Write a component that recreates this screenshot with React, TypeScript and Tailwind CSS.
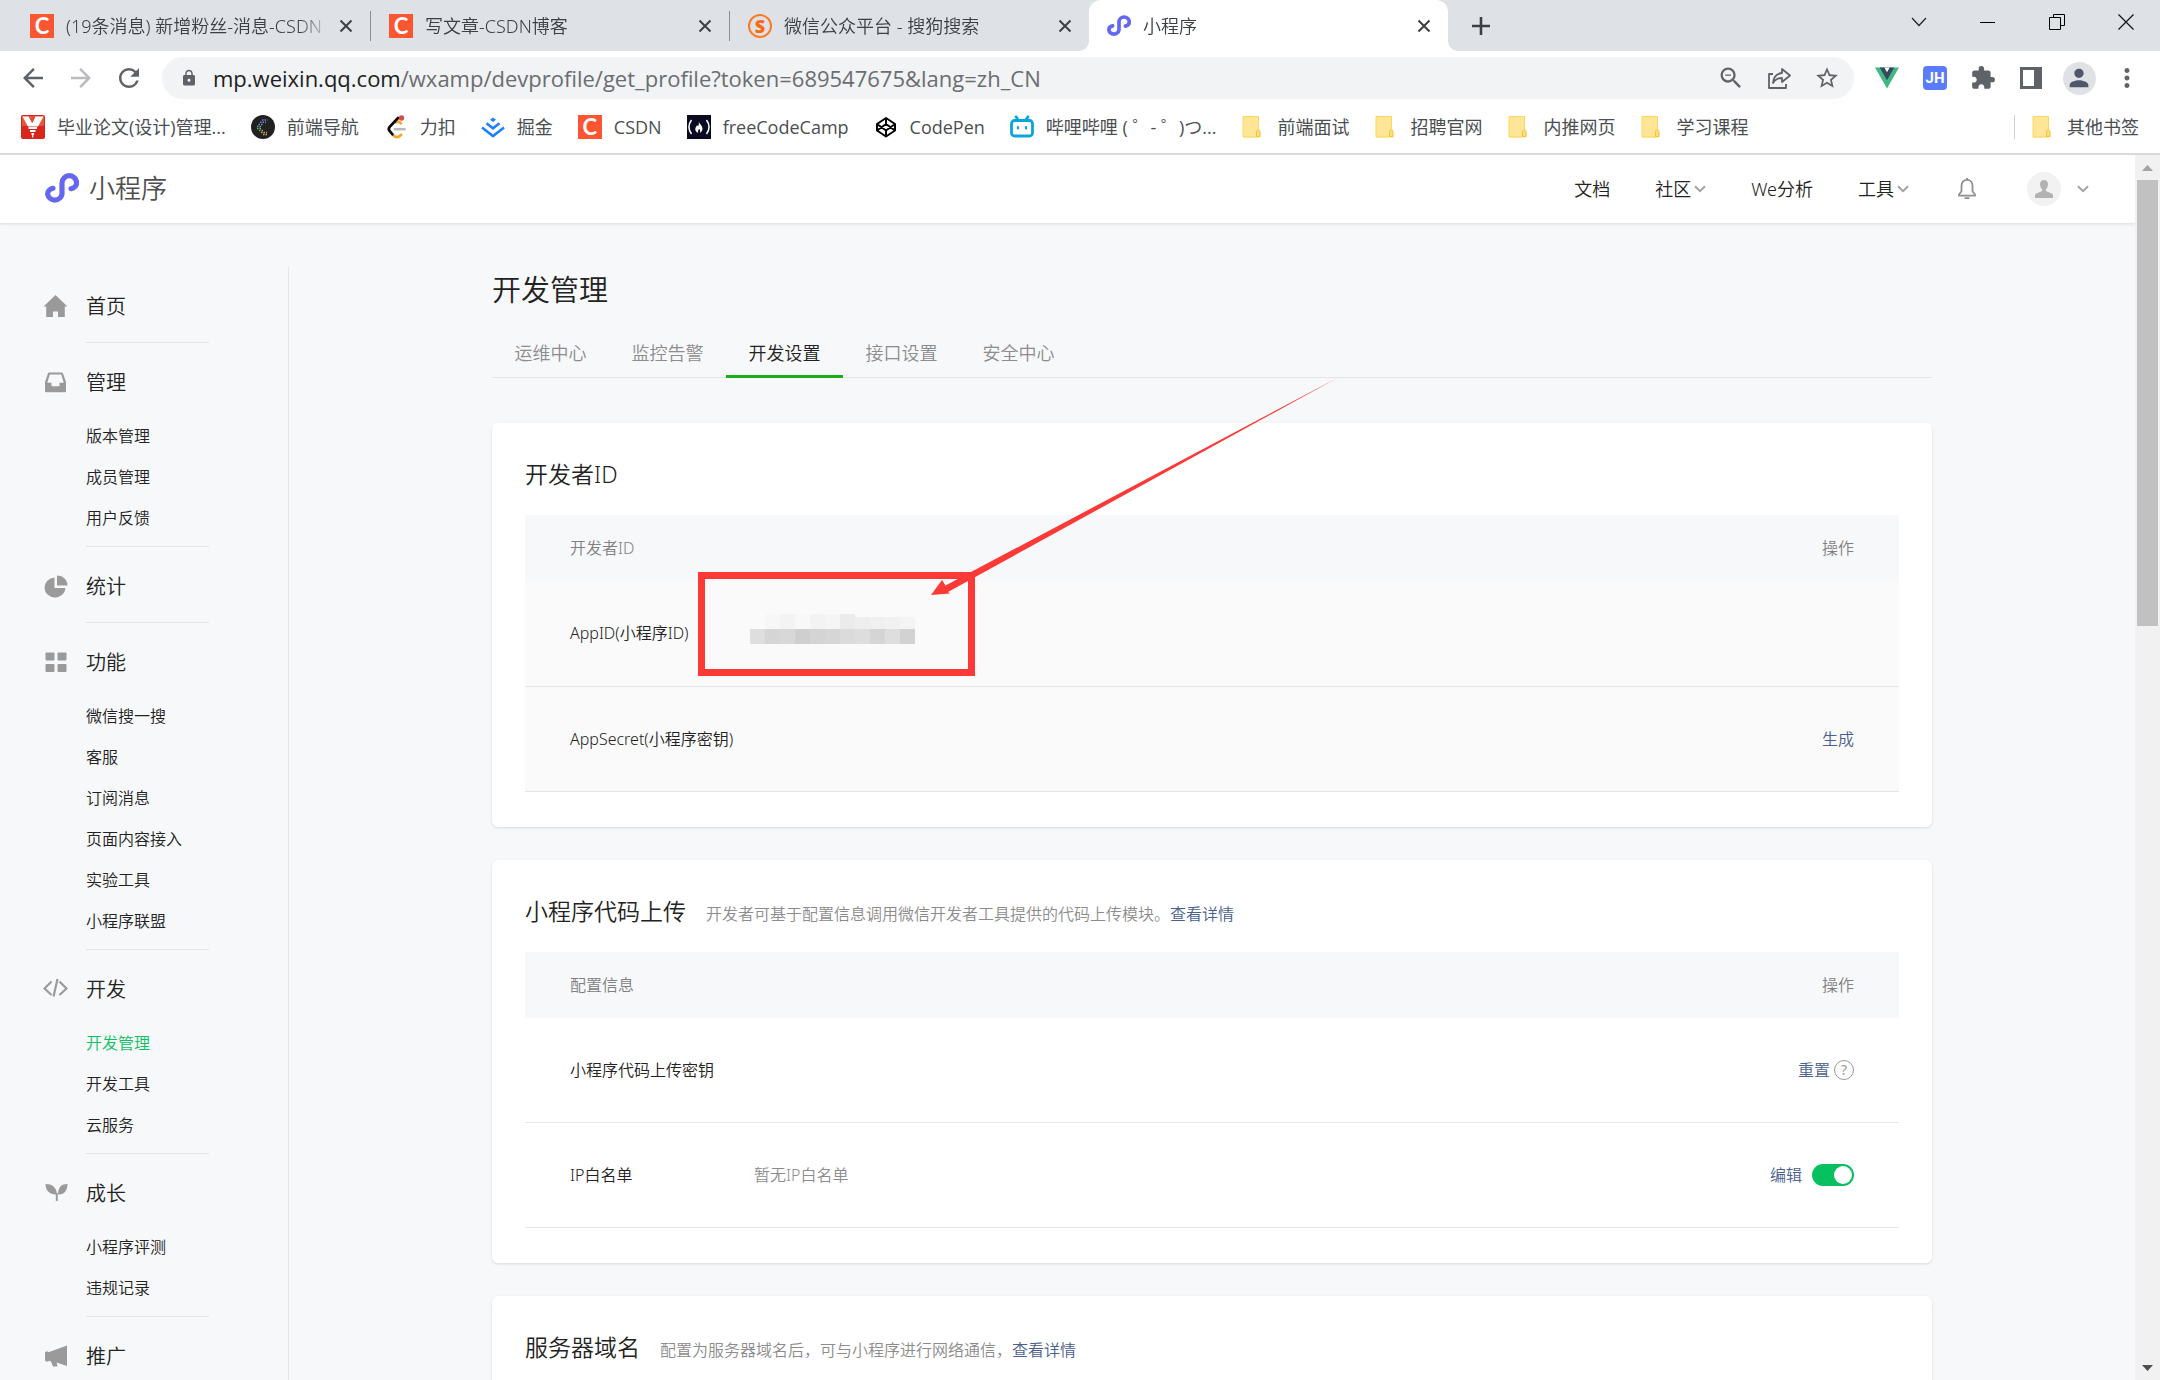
import type { ReactNode } from "react";
import {
  MdArrowBack,
  MdArrowForward,
  MdRefresh,
  MdLock,
  MdZoomOut,
  MdStarBorder,
  MdExtension,
  MdPerson,
  MdMoreVert,
} from "react-icons/md";

function MiniProgramMark({ className }: { className: string }) {
  return (
    <svg viewBox="0 0 34 31" className={className} fill="none" stroke="#6467f0" strokeWidth="5.2" strokeLinecap="round">
      <path d="M26 15.7C29 15 31.6 12.8 31.6 10A7.3 7.3 0 0 0 17 10V21A7.3 7.3 0 0 1 2.6 21C2.6 18.2 5 16 8 15.3" />
    </svg>
  );
}

function CsdnIcon() {
  return (
    <span className="flex size-6 shrink-0 items-center justify-center bg-[#fc5531] font-['Lato'] text-[22px] leading-6 font-bold text-white">
      C
    </span>
  );
}

function SogouIcon() {
  return (
    <span className="flex size-6 shrink-0 items-center justify-center rounded-full border-2 border-[#fb7a22] font-['Open_Sans'] text-[18px] leading-5 font-extrabold text-[#fb6a12]">
      S
    </span>
  );
}

function CloseIcon() {
  return (
    <svg viewBox="0 0 14 14" className="size-3.5" stroke="#3c4043" strokeWidth="2">
      <path d="M1.5 1.5l11 11M12.5 1.5l-11 11" />
    </svg>
  );
}

function Chevron({ className = "" }: { className?: string }) {
  return (
    <svg viewBox="0 0 12 8" className={"h-2 w-3 " + className} fill="none" stroke="#a3a3a3" strokeWidth="2">
      <path d="M1 1.2l5 5 5-5" />
    </svg>
  );
}

function FolderIcon() {
  return (
    <svg viewBox="0 0 24 24" className="size-6 shrink-0">
      <path d="M2 1.5h15.5v14.5l2 1v5.500H2z" fill="#ffe596" />
      <path d="M2 1.500h15.500v14.500M2 1.500v20.500h14" fill="none" stroke="#fbd85d" strokeWidth="1" />
      <path d="M15.500 21.500v-5c0-1 1-1.500 2-1.500s1.500.6 1.500 1.500v5z" fill="#fddf7a" stroke="#f2c53c" strokeWidth="1" />
    </svg>
  );
}

const bookmarkIcons: Record<string, ReactNode> = {
  thesis: (
    <svg viewBox="0 0 24 24" className="size-6 shrink-0">
      <rect width="24" height="24" rx="2" fill="#d9261c" />
      <rect x="1" y="1" width="22" height="10" rx="1" fill="#e8553f" />
      <path d="M1.500 1.500h6l3.500 6.500 3-6.500h8.500l-5.500 10h-10z" fill="#fff" />
      <path d="M12 1.500h2.500l-3 6.500-2-4z" fill="#d9503c" />
      <path d="M7.500 13h8.500M9 16h5.500M10.500 19h2.500" stroke="#fff" strokeWidth="1.800" />
      <path d="M11.700 22.500v-3" stroke="#fff" strokeWidth="1.200" />
    </svg>
  ),
  nav: (
    <svg viewBox="0 0 24 24" className="size-6 shrink-0">
      <circle cx="12" cy="12" r="12" fill="#212121" />
      <g strokeWidth="1.500" strokeDasharray="1.500 1">
        <path d="M11 5h5.500M9 7.200h6" stroke="#7d7fc4" />
        <path d="M7.500 9.500h4.500M6 11.500h4" stroke="#5d9fb0" />
        <path d="M6 13.500h5M8 15.500h5" stroke="#7fb069" />
        <path d="M10 17.500h6M12 19.500h4" stroke="#d9a05b" />
      </g>
    </svg>
  ),
  leetcode: (
    <svg viewBox="0 0 24 24" className="size-6 shrink-0" fill="none" strokeWidth="2.600" strokeLinecap="round">
      <path d="M9.500 20.500c2.500 2.500 5.500 2 7.800-.8M11.500 7.500c2-1.500 4-1 5.500.8" stroke="#f5a623" />
      <path d="M14 3L6 11.500c-1.500 1.500-1.500 3.500 0 5l2.500 2.800" stroke="#0a0a0a" />
      <path d="M11 14.300h9.500" stroke="#b9b9b9" />
      <circle cx="17.500" cy="3" r="2.700" fill="#d64c4c" stroke="none" />
    </svg>
  ),
  juejin: (
    <svg viewBox="0 0 24 24" className="size-6 shrink-0" fill="none" stroke="#1e80ff" strokeWidth="2.600">
      <path d="M12 2.500l3 2.300-3 2.300-3-2.300z" fill="#1e80ff" stroke="none" />
      <path d="M5.500 8.300L12 13.300l6.500-5M1 12.500l11 8.500 11-8.500" />
    </svg>
  ),
  csdn: <CsdnIcon />,
  fcc: (
    <svg viewBox="0 0 24 24" className="size-6 shrink-0">
      <rect width="24" height="24" fill="#0a0a23" />
      <path d="M4.500 5c-3.300 4.500-3.300 9.500 0 14M19.500 5c3.300 4.500 3.300 9.500 0 14" fill="none" stroke="#fff" strokeWidth="1.500" />
      <path d="M11.500 6c.4 2.600 4 4.400 4 7.800 0 2-1.300 3.500-2.600 4 .9-1.800 0-3-.9-4-.3 1.300-1.500 2.200-.7 4-1.800-.5-3.200-2-3-4.100.2-1.800 1.300-2.200 1.700-3.500.9.300.9.900.9 1.300 1.100-1.300 1.300-3.500.6-5.500z" fill="#fff" />
    </svg>
  ),
  codepen: (
    <svg viewBox="0 0 24 24" className="size-6 shrink-0" fill="none" stroke="#000" strokeWidth="2" strokeLinejoin="round">
      <path d="M12 3l9 6v6.500l-9 6-9-6V9zM12 3v6M12 15.500v6M3 9l9 6.500L21 9M3 15.500L12 9l9 6.500" />
    </svg>
  ),
  bilibili: (
    <svg viewBox="0 0 24 24" className="size-6 shrink-0" fill="none" stroke="#0aa5de" strokeWidth="2.800" strokeLinecap="round">
      <rect x="1.500" y="5.500" width="21" height="15.500" rx="3" />
      <path d="M6 1.800l2 3M18 1.800l-2 3" />
      <path d="M8 12v1.500M16 12v1.500" strokeWidth="2.200" />
    </svg>
  ),
  folder: <FolderIcon />,
};

const bookmarks = [
  { icon: "thesis", label: "毕业论文(设计)管理..." },
  { icon: "nav", label: "前端导航" },
  { icon: "leetcode", label: "力扣" },
  { icon: "juejin", label: "掘金" },
  { icon: "csdn", label: "CSDN" },
  { icon: "fcc", label: "freeCodeCamp" },
  { icon: "codepen", label: "CodePen" },
  { icon: "bilibili", label: "哔哩哔哩 ( ゜- ゜)つ..." },
  { icon: "folder", label: "前端面试" },
  { icon: "folder", label: "招聘官网" },
  { icon: "folder", label: "内推网页" },
  { icon: "folder", label: "学习课程" },
];

function BrowserTab({ icon, title, divider = false }: { icon: ReactNode; title: string; divider?: boolean }) {
  return (
    <div className="flex h-full w-[359px] items-center">
      <div className="flex h-full min-w-0 flex-1 items-center pr-[17px] pl-[18px]">
        {icon}
        <span className="ml-3 flex-1 overflow-hidden text-[18px] leading-6 whitespace-nowrap [mask-image:linear-gradient(to_right,black_88%,transparent)]">
          {title}
        </span>
        <button type="button" aria-label="关闭标签页" className="ml-2 shrink-0">
          <CloseIcon />
        </button>
      </div>
      {divider && <span className="h-[30px] w-px bg-[#8a8d91]" />}
    </div>
  );
}

function TabStrip() {
  return (
    <div className="flex h-[51px] bg-[#dee1e6] pl-3 text-[#3c4043]">
      <BrowserTab icon={<CsdnIcon />} title="(19条消息) 新增粉丝-消息-CSDN" divider />
      <BrowserTab icon={<CsdnIcon />} title="写文章-CSDN博客" divider />
      <BrowserTab icon={<SogouIcon />} title="微信公众平台 - 搜狗搜索" />
      <div className="relative h-full rounded-t-xl bg-white">
        <svg viewBox="0 0 10 10" className="absolute bottom-0 -left-2.5 size-2.5">
          <path d="M10 0v10H0A10 10 0 0 0 10 0z" fill="#fff" />
        </svg>
        <BrowserTab icon={<MiniProgramMark className="h-[22px] w-6 shrink-0" />} title="小程序" />
        <svg viewBox="0 0 10 10" className="absolute -right-2.5 bottom-0 size-2.5">
          <path d="M0 0v10h10A10 10 0 0 1 0 0z" fill="#fff" />
        </svg>
      </div>
      <button type="button" aria-label="新标签页" className="ml-6">
        <svg viewBox="0 0 18 18" className="size-[18px]" stroke="#3c4043" strokeWidth="2.600">
          <path d="M9 0v18M0 9h18" />
        </svg>
      </button>
      <div className="ml-auto flex h-11">
        <button type="button" aria-label="搜索标签页" className="flex w-[69px] items-center justify-center">
          <svg viewBox="0 0 16 10" className="h-2.5 w-4" fill="none" stroke="#222" strokeWidth="1.200">
            <path d="M1 1l7 7.500L15 1" />
          </svg>
        </button>
        <button type="button" aria-label="最小化" className="flex w-[69px] items-center justify-center">
          <span className="h-px w-[15px] bg-black" />
        </button>
        <button type="button" aria-label="还原" className="flex w-[69px] items-center justify-center">
          <svg viewBox="0 0 16 16" className="size-4" fill="none" stroke="#000" strokeWidth="1">
            <path d="M.5 3.500h11v12H.5zM4.500 3.500v-3h11v11h-4" />
          </svg>
        </button>
        <button type="button" aria-label="关闭窗口" className="flex w-[69px] items-center justify-center">
          <svg viewBox="0 0 16 16" className="size-4" stroke="#111" strokeWidth="1.200">
            <path d="M.5.5l15 15M15.500.5l-15 15" />
          </svg>
        </button>
      </div>
    </div>
  );
}

function ToolButton({ label, children }: { label: string; children: ReactNode }) {
  return (
    <button type="button" aria-label={label} className="flex w-12 shrink-0 items-center justify-center text-[#5f6368]">
      {children}
    </button>
  );
}

function Toolbar() {
  return (
    <div className="flex h-[54px] items-center bg-white px-[9px]">
      <ToolButton label="后退">
        <MdArrowBack className="size-[30px]" />
      </ToolButton>
      <ToolButton label="前进">
        <MdArrowForward className="size-[30px] text-[#b9bbbe]" />
      </ToolButton>
      <ToolButton label="刷新">
        <MdRefresh className="size-[30px]" />
      </ToolButton>
      <div className="mx-[9px] flex h-[42px] flex-1 items-center rounded-full bg-[#f1f3f4] pr-[3px] pl-[18px]">
        <MdLock className="size-[18px] text-[#5f6368]" />
        <p className="ml-[15px] flex-1 font-['Open_Sans'] text-[22px] leading-7 font-normal whitespace-nowrap text-[#6a6d71]">
          <span className="text-[#202124]">mp.weixin.qq.com</span>
          /wxamp/devprofile/get_profile?token=689547675&amp;lang=zh_CN
        </p>
        <ToolButton label="缩小">
          <MdZoomOut className="size-7" />
        </ToolButton>
        <ToolButton label="分享">
          <svg viewBox="0 0 24 24" className="size-6" fill="none" stroke="#5f6368" strokeWidth="1.800" strokeLinejoin="round">
            <path d="M6 8H2v14h17v-4" />
            <path d="M15 3l8 6.500-8 6.500v-4c-4.500 0-7 1.500-9 5 .5-6 3.500-9.500 9-10z" />
          </svg>
        </ToolButton>
        <ToolButton label="收藏">
          <MdStarBorder className="size-[26px]" />
        </ToolButton>
      </div>
      <ToolButton label="Vue">
        <svg viewBox="0 0 24 22" className="h-[22px] w-6">
          <path d="M0 .5h24L12 21.500z" fill="#41b883" />
          <path d="M4.800.5h14.400L12 13.300z" fill="#35495e" />
          <path d="M9.300.5L12 5.200 14.700.5z" fill="#fff" />
        </svg>
      </ToolButton>
      <ToolButton label="JSON 助手">
        <span className="flex size-6 items-center justify-center rounded-sm bg-[#5b7cfa] font-['Roboto'] text-[15px] leading-6 font-bold text-white">
          JH
        </span>
      </ToolButton>
      <ToolButton label="扩展程序">
        <MdExtension className="size-[26px]" />
      </ToolButton>
      <ToolButton label="侧边栏">
        <svg viewBox="0 0 22 22" className="size-[22px]" fill="#5f6368">
          <path d="M0 0h22v22H0zM3 3v16h11V3z" fillRule="evenodd" />
        </svg>
      </ToolButton>
      <ToolButton label="个人资料">
        <span className="flex size-[33px] items-center justify-center rounded-full bg-[#dfe1e5]">
          <MdPerson className="size-7 text-[#4f586b]" />
        </span>
      </ToolButton>
      <ToolButton label="更多">
        <MdMoreVert className="size-[30px]" />
      </ToolButton>
    </div>
  );
}

function BookmarksBar() {
  return (
    <nav aria-label="书签栏" className="flex h-[50px] items-center border-b-2 border-[#d9d9d9] bg-white px-[21px] pb-1 font-['Open_Sans','Noto_Sans_CJK_SC',sans-serif] text-[18px] leading-6 font-normal text-[#4a4e52]">
      <div className="flex items-center gap-[25px]">
        {bookmarks.map((b) => (
          <a key={b.label} href="#" className="flex items-center gap-3 whitespace-nowrap">
            {bookmarkIcons[b.icon]}
            {b.label}
          </a>
        ))}
      </div>
      <span className="ml-auto h-6 w-px bg-[#cfd1d4]" />
      <a href="#" className="ml-4 flex items-center gap-3 whitespace-nowrap">
        <FolderIcon />
        其他书签
      </a>
    </nav>
  );
}

function SiteHeader() {
  return (
    <header className="relative flex h-[68px] shrink-0 items-center bg-white pr-[46px] pb-px pl-[45px] shadow-[0_1px_3px_rgba(0,0,0,0.12)]">
      <a href="#" className="flex items-center pb-px text-[26px] leading-8 text-[#4f4f4f]">
        <MiniProgramMark className="mr-2.5 h-[31px] w-[34px]" />
        小程序
      </a>
      <nav className="ml-auto flex items-center text-[18px] leading-6 text-[#222222]">
        <a href="#">文档</a>
        <button type="button" className="ml-[45px] flex items-center gap-[3px]">
          社区
          <Chevron />
        </button>
        <a href="#" className="ml-[45px]">We分析</a>
        <button type="button" className="ml-[45px] flex items-center gap-[3px]">
          工具
          <Chevron />
        </button>
        <button type="button" aria-label="通知" className="ml-12">
          <svg viewBox="0 0 20 22" className="h-[22px] w-5" fill="none" stroke="#8f8f8f" strokeWidth="1.800" strokeLinejoin="round">
            <path d="M10 1.800c-3.600 0-5.500 2.700-5.500 6v5.500L2 16.500v1.200h16v-1.200l-2.500-3.200V7.800c0-3.300-1.900-6-5.500-6z" />
            <path d="M7.500 20.200h5M10 0v2" />
          </svg>
        </button>
        <button type="button" aria-label="账号" className="ml-[50px] flex items-center gap-4">
          <span className="flex size-[34px] items-center justify-center rounded-full bg-[#f2f2f2]">
            <svg viewBox="0 0 18 18" className="size-[18px]" fill="#b2b2b2">
              <path d="M9 0c2.600 0 4 1.900 4 4.300 0 2.200-1 3.900-1.900 4.900-.5.700-.4 1.700.4 2.100l5 2.200c1 .4 1.500 1 1.500 2V18H0v-2.500c0-1 .5-1.600 1.500-2l5-2.200c.8-.4.9-1.400.4-2.100C6 8.200 5 6.500 5 4.300 5 1.900 6.400 0 9 0z" />
            </svg>
          </span>
          <Chevron />
        </button>
      </nav>
    </header>
  );
}

const sideIcons: Record<string, ReactNode> = {
  home: <path d="M12.500 1L24.500 12.500h-2.700V23h-6.800v-5.500h-5V23H3.200V12.500H.5z" />,
  inbox: (
    <path
      fillRule="evenodd"
      d="M6.500 2.500h12c.8 0 1.300.3 1.600 1L23 12v9c0 .8-.5 1.300-1.300 1.300H3.300C2.500 22.300 2 21.800 2 21v-9l2.900-8.500c.3-.7.8-1 1.600-1zM6.800 4.500L4.300 12.800h4.200v2.700c0 .5.300.8.800.8h6.400c.5 0 .8-.3.800-.8v-2.700h4.200l-2.500-8.300z"
    />
  ),
  pie: (
    <>
      <path d="M11.500 3.500V14h11A10.500 10 0 1 1 11.500 3.500z" />
      <path d="M14 1.500c6 0 10.500 4.500 10.500 10H14z" />
    </>
  ),
  grid: (
    <>
      <rect x="2.500" y="2.500" width="9" height="8" rx="1" />
      <rect x="14.500" y="2.500" width="9" height="8" rx="1" />
      <rect x="2.500" y="14" width="9" height="8" rx="1" />
      <rect x="14.500" y="14" width="9" height="8" rx="1" />
    </>
  ),
  code: (
    <path
      d="M8.500 4.500L1.500 11.500l7 6.500M16.500 4.500l7 7-7 6.500M14.500 2l-4 17.500"
      fill="none"
      stroke="#9a9a9a"
      strokeWidth="2.200"
    />
  ),
  sprout: (
    <>
      <path d="M2.500 3c6.500 0 11 3 11.500 10.500C6.500 14 2.500 9.500 2.500 3z" />
      <path d="M24.500 3c-6 0-9.500 3-9.500 10.500 6.500.5 9.500-4.500 9.500-10.500z" />
      <path d="M12.800 12h2v8h-2z" />
    </>
  ),
  horn: <path d="M2 8.500l1-1h2l.500.8L24 1.500V22l-10.500-3.500.8 2.500c.2 1-.2 1.500-1 1.500H10L8 17.500l-2-.8-.8.8H3l-1-1z" />,
};

const menu: { icon: string; title: string; items: string[] }[] = [
  { icon: "home", title: "首页", items: [] },
  { icon: "inbox", title: "管理", items: ["版本管理", "成员管理", "用户反馈"] },
  { icon: "pie", title: "统计", items: [] },
  { icon: "grid", title: "功能", items: ["微信搜一搜", "客服", "订阅消息", "页面内容接入", "实验工具", "小程序联盟"] },
  { icon: "code", title: "开发", items: ["开发管理", "开发工具", "云服务"] },
  { icon: "sprout", title: "成长", items: ["小程序评测", "违规记录"] },
  { icon: "horn", title: "推广", items: [] },
];

function Sidebar() {
  return (
    <aside className="mt-11 w-[289px] shrink-0 border-r border-[#e4e5e8]">
      {menu.map((group) => (
        <section key={group.title} className="grid grid-cols-[86px_123px]">
          <div className="flex h-[72px] items-center pt-1.5 pl-[43px]">
            <svg viewBox="0 0 25 24" className="h-6 w-[25px]" fill="#9a9a9a">
              {sideIcons[group.icon]}
            </svg>
          </div>
          <div className={group.items.length > 0 ? "border-b border-[#e4e5e8] pb-2" : "border-b border-[#e4e5e8] pb-[3px]"}>
            <h2 className="flex h-[72px] items-center pt-2 text-[20px] leading-7 text-[#222222]">{group.title}</h2>
            <ul>
              {group.items.map((item) => (
                <li key={item} className="flex h-[41px] items-center">
                  <a
                    href="#"
                    className={
                      item === "开发管理"
                        ? "text-[16px] leading-6 whitespace-nowrap text-[#07c160]"
                        : "text-[16px] leading-6 whitespace-nowrap text-[#222222]"
                    }
                  >
                    {item}
                  </a>
                </li>
              ))}
            </ul>
          </div>
        </section>
      ))}
    </aside>
  );
}

const tabs = ["运维中心", "监控告警", "开发设置", "接口设置", "安全中心"];

function Card({ title, desc, children }: { title: string; desc?: string; children?: ReactNode }) {
  return (
    <section className="mb-[33px] rounded-md bg-white px-[33px] pb-[35px] shadow-[0_1px_3px_rgba(0,0,0,0.12)]">
      <div className="flex h-[92px] items-center pt-2.5">
        <div className="flex items-baseline">
          <h2 className="text-[23px] leading-8 text-[#222222]">{title}</h2>
          {desc && (
            <p className="ml-5 text-[16px] leading-6 text-[#8c8c8c]">
              {desc}
              <a href="#" className="text-[#4a5f8d]">查看详情</a>
            </p>
          )}
        </div>
      </div>
      {children}
    </section>
  );
}

function InfoTable({ head, shaded = false, children }: { head: string; shaded?: boolean; children: ReactNode }) {
  return (
    <table className={shaded ? "w-full table-fixed bg-[#fafafa] text-[16px] leading-6 text-[#222222]" : "w-full table-fixed text-[16px] leading-6 text-[#222222]"}>
      <thead>
        <tr className="h-[66px] bg-[#f7f8fa] text-[#808080]">
          <th scope="col" className="w-[225px] pl-[45px] text-left font-[350]">{head}</th>
          <th scope="col" aria-label="内容" />
          <th scope="col" className="w-[200px] pr-[45px] text-right font-[350]">操作</th>
        </tr>
      </thead>
      <tbody>{children}</tbody>
    </table>
  );
}

function InfoRow({ label, value, action }: { label: string; value?: ReactNode; action?: ReactNode }) {
  return (
    <tr className="h-[105px] border-b border-[#e4e5e8]">
      <th scope="row" className="pl-[45px] text-left font-[350] whitespace-nowrap">{label}</th>
      <td>{value}</td>
      <td className="pr-[45px] text-[#4a5f8d]">
        <div className="flex items-center justify-end">{action}</div>
      </td>
    </tr>
  );
}

const upperCells = ["#f7f7f7", "#f3f3f3", "#f8f8f8", "#f3f3f3", "#f5f5f5", "#ebebeb", "#eeeeee", "#f0f0f0", "#f1f1f1", "#f4f4f4"];
const lowerCells = ["#dedede", "#d5d5d5", "#d8d8d8", "#cfcfcf", "#d4d4d4", "#d6d6d6", "#dbdbdb", "#dddddd", "#d5d5d5", "#dedede", "#d2d2d2"];

function MaskedId() {
  return (
    <svg viewBox="0 0 165 39" className="h-[39px] w-[165px]" role="img" aria-label="已遮盖的 AppID">
      {upperCells.map((c, i) => (
        <rect key={i} x={15 + i * 15} y={i > 5 ? 3 : 0} width="15" height={i > 5 ? 12 : 15} fill={c} />
      ))}
      {lowerCells.map((c, i) => (
        <rect key={i} x={i * 15} y="15" width="15" height="15" fill={c} />
      ))}
    </svg>
  );
}

function Annotation() {
  return (
    <>
      <div className="pointer-events-none absolute top-[349px] left-[206px] h-[104px] w-[277px] border-7 border-[#fb3a38]" />
      <svg viewBox="0 0 410 220" className="pointer-events-none absolute top-[154px] left-[438px] h-[220px] w-[410px]" fill="#fb3a38">
        <path d="M1 218L12 203l3.500 5.500L409 0 18 215l2 1.500z" />
      </svg>
    </>
  );
}

function Content() {
  return (
    <main className="min-w-0 flex-1">
      <div className="relative mx-auto max-w-[1440px] pt-[47px]">
        <h1 className="text-[29px] leading-10 text-[#222222]">开发管理</h1>
        <div role="tablist" className="mt-5 flex h-12 border-b border-[#e4e5e8] text-[18px] leading-6">
          {tabs.map((t) => (
            <button
              key={t}
              type="button"
              role="tab"
              aria-selected={t === "开发设置"}
              className={
                t === "开发设置"
                  ? "-mb-px w-[117px] border-b-3 border-[#1aad19] text-[#222222]"
                  : "w-[117px] pb-0.5 text-[#8c8c8c]"
              }
            >
              {t}
            </button>
          ))}
        </div>
        <div className="mt-[45px]">
          <Card title="开发者ID">
            <InfoTable head="开发者ID" shaded>
              <InfoRow label="AppID(小程序ID)" value={<MaskedId />} />
              <InfoRow label="AppSecret(小程序密钥)" action={<a href="#">生成</a>} />
            </InfoTable>
          </Card>
          <Card title="小程序代码上传" desc="开发者可基于配置信息调用微信开发者工具提供的代码上传模块。">
            <InfoTable head="配置信息">
              <InfoRow
                label="小程序代码上传密钥"
                action={
                  <>
                    <a href="#">重置</a>
                    <button type="button" aria-label="帮助" className="ml-1 flex size-5 items-center justify-center rounded-full border border-[#9a9a9a] text-[14px] leading-4 font-normal text-[#9a9a9a]">
                      ?
                    </button>
                  </>
                }
              />
              <InfoRow
                label="IP白名单"
                value={<span className="pl-1 text-[#8c8c8c]">暂无IP白名单</span>}
                action={
                  <>
                    <a href="#">编辑</a>
                    <label className="ml-2.5 flex h-[22px] w-[42px] cursor-pointer items-center rounded-full bg-[#07c160] px-0.5">
                      <input type="checkbox" defaultChecked aria-label="启用IP白名单" className="peer sr-only" />
                      <span className="size-[18px] rounded-full bg-white peer-checked:ml-auto" />
                    </label>
                  </>
                }
              />
            </InfoTable>
          </Card>
          <Card title="服务器域名" desc="配置为服务器域名后，可与小程序进行网络通信，" />
        </div>
        <Annotation />
      </div>
    </main>
  );
}

function ScrollTrack() {
  return (
    <div aria-hidden="true" className="flex w-[25px] shrink-0 flex-col items-center bg-[#f1f1f1]">
      <svg viewBox="0 0 25 25" className="size-[25px] shrink-0" fill="#a3a3a3">
        <path d="M7 16l5.500-6 5.500 6z" />
      </svg>
      <div className="h-[446px] w-[21px] bg-[#c1c1c1]" />
      <svg viewBox="0 0 25 25" className="mt-auto size-[25px] shrink-0" fill="#505050">
        <path d="M7 10l5.500 6 5.500-6z" />
      </svg>
    </div>
  );
}

export default function App() {
  return (
    <div className="flex h-screen flex-col overflow-hidden bg-[#f7f8fa] font-['Noto_Sans','Noto_Sans_CJK_SC',sans-serif] font-[350]">
      <TabStrip />
      <Toolbar />
      <BookmarksBar />
      <div className="flex min-h-0 flex-1">
        <div className="flex min-w-0 flex-1 flex-col overflow-hidden">
          <SiteHeader />
          <div className="flex min-h-0 flex-1">
            <Sidebar />
            <Content />
          </div>
        </div>
        <ScrollTrack />
      </div>
    </div>
  );
}
